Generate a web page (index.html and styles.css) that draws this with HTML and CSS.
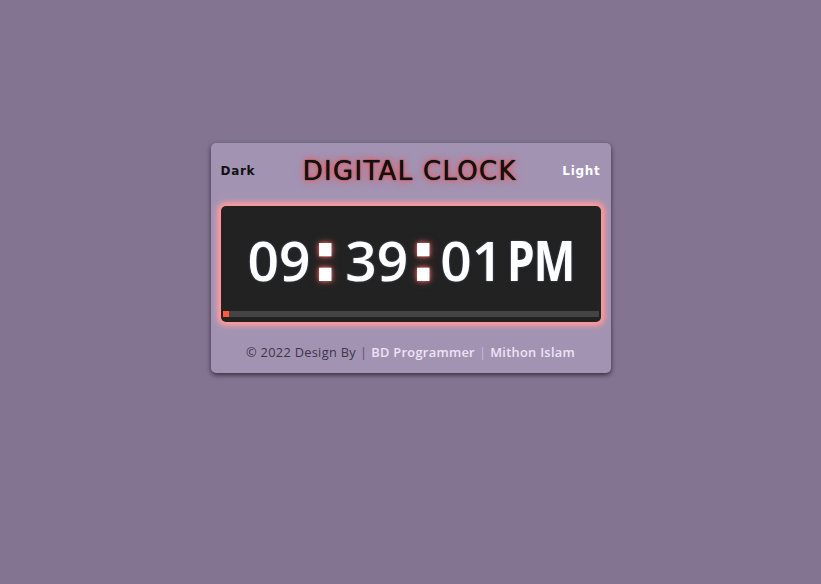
FILE: index.html
```html
<!DOCTYPE html>
<html>
<head>
<meta charset="utf-8">
<link rel="stylesheet" href="styles.css">
</head>
<body>
<div class="card">
  <div class="header">
    <span class="mode dark">Dark</span>
    <h1 class="title">DIGITAL CLOCK</h1>
    <span class="mode light">Light</span>
  </div>
  <div class="display">
    <div class="time">
      <span class="num">09</span><span class="colon">:</span><span class="num">39</span><span class="colon colon2">:</span><span class="num">01</span><span class="ampm">PM</span>
    </div>
    <div class="progress"><div class="fill" style="width:6px"></div></div>
  </div>
  <div class="footer">
    <span>© 2022 Design By</span><span class="sep">|</span><a class="link">BD Programmer</a><span class="sep sep2">|</span><a class="link">Mithon Islam</a>
  </div>
</div>
</body>
</html>
```
FILE: styles.css
```css
html, body {
  margin: 0;
  padding: 0;
}
body {
  background: #837592;
  width: 821px;
  height: 584px;
  display: flex;
  justify-content: center;
  align-items: flex-start;
  padding-top: 143px;
  box-sizing: border-box;
  font-family: "DejaVu Sans", sans-serif;
}
.card {
  width: 400px;
  height: 230px;
  box-sizing: border-box;
  background: #a393b3;
  border-radius: 5px;
  box-shadow: 0 2px 5px rgba(30, 20, 40, 0.75);
  padding: 0 10px;
  display: flex;
  flex-direction: column;
}
.header {
  display: flex;
  align-items: center;
  justify-content: space-between;
  height: 54px;
  padding-top: 2px;
  box-sizing: border-box;
}
.mode {
  font-size: 12px;
  font-weight: bold;
  letter-spacing: 0.7px;
}
.dark { color: #111; }
.light { color: #fff; }
.title {
  margin: 0;
  font-size: 26px;
  font-weight: normal;
  letter-spacing: 1.3px;
  color: #111;
  text-shadow: 0 0 1px #000, 0 0 5px #ff4d4d, 0 0 9px rgba(255, 80, 80, 0.7);
  transform: translateX(1px);
}
.display {
  margin-top: 9px;
  height: 116px;
  background: #222;
  border-radius: 5px;
  box-shadow: 0 0 5px 4px #ff9a9a;
  display: flex;
  flex-direction: column;
  padding: 0 2px 5px;
  box-sizing: border-box;
}
.time {
  display: flex;
  align-items: baseline;
  justify-content: center;
  color: #fff;
  font-family: "Open Sans", sans-serif;
  font-weight: 600;
  font-size: 55px;
  line-height: 1;
  padding-top: 16px;
  padding-left: 4px;
  text-shadow: 0 0 2px rgba(140, 180, 255, 0.5);
}
.colon {
  font-family: "DejaVu Sans", sans-serif;
  font-weight: bold;
  font-size: 70px;
  margin: 0 6px 0 1px;
  text-shadow: 0 0 4px #ff6b6b, 0 0 9px rgba(255, 100, 100, 0.5);
}
.colon2 {
  margin-right: 3px;
}
.ampm {
  margin-left: 4px;
  font-weight: 700;
  letter-spacing: -1px;
  display: inline-block;
  transform: scaleX(0.8);
  transform-origin: left center;
  margin-right: -14px;
}
.progress {
  height: 6px;
  background: #444;
  margin-top: auto;
}
.fill {
  height: 100%;
  background: #ff5b3c;
}
.footer {
  flex: 1;
  display: flex;
  align-items: center;
  justify-content: center;
  font-family: "Open Sans", sans-serif;
  font-size: 12.8px;
  color: #3e3548;
  letter-spacing: 0.3px;
  padding-top: 8px;
  gap: 4px;
}
.sep {
  color: #5e526c;
}
.sep2 {
  color: #c8bcd6;
}
.link {
  color: #ece4f5;
  font-weight: 600;
}
```
